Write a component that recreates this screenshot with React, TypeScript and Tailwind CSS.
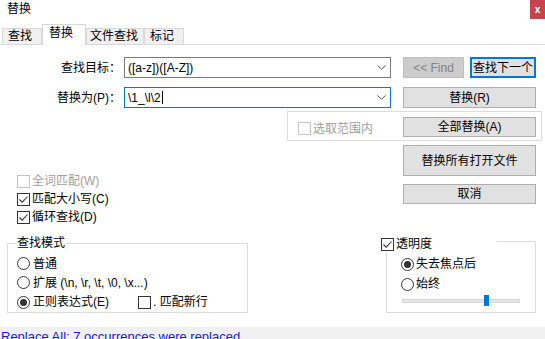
import React from "react";

const Check = ({ checked, disabled }: { checked?: boolean; disabled?: boolean }) => (
  <span
    className={`w-[13px] h-[13px] border ${disabled ? "border-[#c4c4c4]" : "border-[#333333]"} bg-white flex items-center justify-center shrink-0`}
  >
    {checked && (
      <svg width="11" height="11" viewBox="0 0 11 11">
        <path d="M1.5 5.5 L4.2 8.2 L9.5 2.5" stroke="#333333" strokeWidth="1.1" fill="none" />
      </svg>
    )}
  </span>
);

const Radio = ({ selected }: { selected?: boolean }) => (
  <span className="w-[13px] h-[13px] rounded-full border border-[#333333] bg-white flex items-center justify-center shrink-0">
    {selected && <span className="w-[7px] h-[7px] rounded-full bg-[#333333]" />}
  </span>
);

const Btn = ({ children, className }: { children: React.ReactNode; className?: string }) => (
  <div
    className={`flex items-center justify-center bg-[#e1e1e1] border border-[#adadad] text-black leading-[16px] ${className ?? ""}`}
  >
    {children}
  </div>
);

const Chevron = () => (
  <svg width="9" height="5" viewBox="0 0 9 5" className="shrink-0">
    <polyline points="0.5,0.5 4.5,4.2 8.5,0.5" stroke="#555555" strokeWidth="1" fill="none" />
  </svg>
);

export default function App() {
  return (
    <div className="relative w-[545px] h-[339px] bg-white overflow-hidden flex flex-col text-[12px] text-black font-['Liberation_Sans','Noto_Sans_CJK_SC',sans-serif]">
      {/* title bar */}
      <div className="h-[24px] flex justify-between items-start shrink-0">
        <div className="pl-[7px] pt-[1px] leading-[16px]">替换</div>
        <div className="w-[15px] h-[19px] bg-[#c8434c] flex items-center justify-center text-white text-[10px] font-bold leading-none">
          x
        </div>
      </div>

      {/* tabs */}
      <div className="h-[21px] flex items-end pl-[2px] border-b border-[#d9d9d9] shrink-0">
        <div className="w-[40px] h-[16px] bg-[#f0f0f0] border border-b-0 border-[#d9d9d9] pl-[5px] leading-[14px]">查找</div>
        <div className="w-[44px] h-[21px] -mb-px bg-white border border-b-0 border-[#d9d9d9] pl-[6px] pt-[1px] leading-[15px] relative z-10">
          替换
        </div>
        <div className="w-[58px] h-[16px] bg-[#f0f0f0] border border-b-0 border-[#d9d9d9] pl-[3px] leading-[14px]">文件查找</div>
        <div className="w-[40px] h-[16px] bg-[#f0f0f0] border border-b-0 border-[#d9d9d9] pl-[5px] leading-[14px]">标记</div>
      </div>

      {/* row 1 */}
      <div className="flex items-center h-[21px] mt-[12px] shrink-0">
        <div className="w-[121px] text-right leading-[16px]">查找目标：</div>
        <div className="ml-[3px] w-[267px] h-[21px] border border-[#7a7a7a] bg-white flex items-center pl-[3px] pr-[4px]">
          <span className="flex-1 leading-[16px]">([a-z])([A-Z])</span>
          <Chevron />
        </div>
        <div className="ml-[12px] w-[61px] h-[21px] flex items-center justify-center bg-[#cccccc] border border-[#bfbfbf] text-[#838383] leading-[16px]">
          &lt;&lt; Find
        </div>
        <div className="ml-[6px] w-[66px] h-[21px] flex items-center justify-center bg-[#e1e1e1] border-2 border-[#0078d7] leading-[16px]">
          查找下一个
        </div>
      </div>

      {/* row 2 */}
      <div className="flex items-center h-[21px] mt-[9px] shrink-0">
        <div className="w-[121px] text-right leading-[16px]">替换为(P)：</div>
        <div className="ml-[3px] w-[267px] h-[21px] border border-[#0078d7] bg-white flex items-center pl-[3px] pr-[4px]">
          <span className="leading-[16px]">\1_\l\2</span>
          <span className="w-px h-[13px] bg-black ml-[1px]" />
          <span className="flex-1" />
          <Chevron />
        </div>
        <Btn className="ml-[12px] w-[133px] h-[21px]">替换(R)</Btn>
      </div>

      {/* bottom section */}
      <div className="flex h-[216px] mt-[3px] shrink-0">
        {/* left column */}
        <div className="w-[287px] flex flex-col pt-[61px]">
          <div className="h-[18px] flex items-center pl-[17px] gap-[2px] text-[#a0a0a0] leading-[16px]">
            <Check disabled />
            <span>全词匹配(W)</span>
          </div>
          <div className="h-[18px] flex items-center pl-[17px] gap-[2px] leading-[16px]">
            <Check checked />
            <span>匹配大小写(C)</span>
          </div>
          <div className="h-[18px] flex items-center pl-[17px] gap-[2px] leading-[16px]">
            <Check checked />
            <span>循环查找(D)</span>
          </div>

          <div className="relative ml-[7px] mt-[17px] w-[241px] h-[70px] border border-[#dcdcdc] pl-[9px] pt-[10px]">
            <div className="absolute left-[8px] top-[-9px] h-[16px] px-[1px] bg-white leading-[16px]">查找模式</div>
            <div className="h-[19px] flex items-center gap-[3px] leading-[16px]">
              <Radio />
              <span>普通</span>
            </div>
            <div className="h-[19px] flex items-center gap-[3px] leading-[16px]">
              <Radio />
              <span>扩展 (\n, \r, \t, \0, \x...)</span>
            </div>
            <div className="h-[20px] flex items-center leading-[16px]">
              <div className="w-[121px] flex items-center gap-[3px]">
                <Radio selected />
                <span>正则表达式(E)</span>
              </div>
              <div className="flex items-center gap-[2px]">
                <Check />
                <span>. 匹配新行</span>
              </div>
            </div>
          </div>
        </div>

        {/* right column */}
        <div className="w-[255px] flex flex-col items-start">
          <div className="w-[255px] h-[30px] border border-[#dcdcdc] flex items-start pt-[5px] pl-[10px] pr-[5px]">
            <div className="flex items-center gap-[2px] self-center text-[#a0a0a0] leading-[16px]">
              <Check disabled />
              <span>选取范围内</span>
            </div>
            <Btn className="ml-auto w-[133px] h-[20px]">全部替换(A)</Btn>
          </div>
          <Btn className="ml-[116px] mt-[4px] w-[133px] h-[31px]">替换所有打开文件</Btn>
          <Btn className="ml-[116px] mt-[8px] w-[133px] h-[20px]">取消</Btn>

          <div className="relative ml-[99px] mt-[37px] w-[150px] h-[72px] border border-[#dcdcdc] pl-[14px] pt-[12px]">
            <div className="absolute left-[-6px] top-[-6px] w-[116px] h-[16px] bg-white flex items-center gap-[2px] leading-[16px]">
              <Check checked />
              <span>透明度</span>
            </div>
            <div className="h-[20px] flex items-center gap-[2px] leading-[16px]">
              <Radio selected />
              <span>失去焦点后</span>
            </div>
            <div className="h-[20px] flex items-center gap-[2px] leading-[16px]">
              <Radio />
              <span>始终</span>
            </div>
            <div className="relative ml-[1px] mt-[1px] w-[118px] h-[11px] flex items-center">
              <div className="w-full h-[4px] bg-[#e7e7e7] border border-[#d6d6d6]" />
              <div className="absolute left-[82px] top-0 w-[5px] h-[11px] bg-[#0078d7]" />
            </div>
          </div>
        </div>
      </div>

      {/* status bar */}
      <div className="h-[22px] shrink-0 bg-[#f0f0f0] pt-[2px] pl-[1px] text-[13px] text-[#1a1ad0] leading-[15px] font-['Liberation_Sans',sans-serif]">
        Replace All: 7 occurrences were replaced
      </div>
    </div>
  );
}
